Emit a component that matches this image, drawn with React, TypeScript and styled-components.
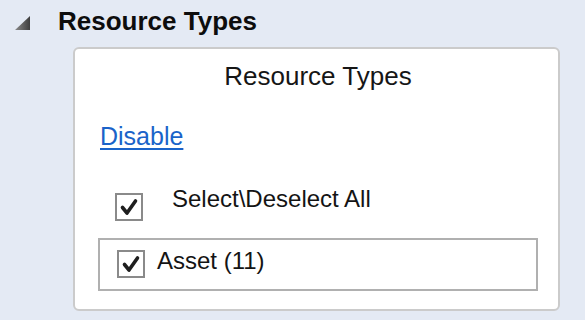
import React from "react";
import styled, { createGlobalStyle } from "styled-components";

const Global = createGlobalStyle`
  html, body {
    margin: 0;
    padding: 0;
    background: #e4eaf4;
    font-family: "Liberation Sans", Arial, sans-serif;
    color: #111;
  }
`;

const Page = styled.div`
  width: 585px;
  height: 320px;
  box-sizing: border-box;
  padding-top: 6px;
  background: #e4eaf4;
  overflow: hidden;
`;

const ExpanderHeader = styled.div`
  display: flex;
  align-items: center;
  height: 30px;
  padding-left: 15px;
  gap: 28px;
`;

const Glyph = styled.svg`
  width: 15px;
  height: 14px;
  flex: none;
  margin-top: 3px;
`;

const HeaderTitle = styled.span`
  font-size: 26px;
  line-height: 30px;
  font-weight: bold;
  color: #0d0d0d;
`;

const Card = styled.div`
  margin: 11px 0 0 73px;
  width: 487px;
  box-sizing: border-box;
  border: 2px solid #cbcbcb;
  border-radius: 6px;
  background: #fff;
  padding: 12px 20px 18px 0;
  display: flex;
  flex-direction: column;
`;

const CardTitle = styled.div`
  font-size: 26px;
  line-height: 30px;
  text-align: center;
  padding-left: 23px;
  color: #161616;
`;

const LinkText = styled.a`
  align-self: flex-start;
  margin: 30px 0 0 25px;
  font-size: 25px;
  line-height: 30px;
  color: #1a63c9;
  text-decoration: underline;
  text-underline-offset: 3px;
  cursor: pointer;
`;

const CheckRow = styled.label<{ $indent: number; $gap: number; $boxTop: number; $textTop: number }>`
  display: flex;
  align-items: flex-start;
  padding-left: ${(p) => p.$indent}px;
  gap: ${(p) => p.$gap}px;

  & > svg {
    margin-top: ${(p) => p.$boxTop}px;
  }
  & > span {
    margin-top: ${(p) => p.$textTop}px;
  }
`;

const SelectAllRow = styled(CheckRow)`
  margin-top: 33px;
`;

const CheckText = styled.span`
  font-size: 24px;
  line-height: 30px;
  color: #141414;
`;

const ListBox = styled.div`
  margin: 17px 0 0 23px;
  height: 53px;
  box-sizing: border-box;
  border: 2px solid #b0b0b0;
  background: #fff;
`;

const BoxSvg = styled.svg`
  width: 28px;
  height: 28px;
  flex: none;
`;

function CheckBox() {
  return (
    <BoxSvg viewBox="0 0 28 28">
      <rect x="1" y="1" width="26" height="26" fill="#fff" stroke="#8a8a8a" strokeWidth="2" />
      <path
        d="M7.5 14.5 L12 20 L20.5 8"
        fill="none"
        stroke="#1e1e1e"
        strokeWidth="3.6"
        strokeLinecap="round"
        strokeLinejoin="round"
      />
    </BoxSvg>
  );
}

export default function App() {
  return (
    <>
      <Global />
      <Page>
        <ExpanderHeader>
          <Glyph viewBox="0 0 15 14">
            <defs>
              <linearGradient id="gl" x1="0" y1="0" x2="1" y2="0">
                <stop offset="0" stopColor="#8a8a8a" />
                <stop offset="1" stopColor="#3e3e3e" />
              </linearGradient>
            </defs>
            <polygon points="15,0 15,14 0,14" fill="url(#gl)" />
          </Glyph>
          <HeaderTitle>Resource Types</HeaderTitle>
        </ExpanderHeader>
        <Card>
          <CardTitle>Resource Types</CardTitle>
          <LinkText>Disable</LinkText>
          <SelectAllRow $indent={40} $gap={29} $boxTop={9} $textTop={0}>
            <CheckBox />
            <CheckText>Select\Deselect All</CheckText>
          </SelectAllRow>
          <ListBox>
            <CheckRow $indent={17} $gap={12} $boxTop={10} $textTop={6}>
              <CheckBox />
              <CheckText>Asset (11)</CheckText>
            </CheckRow>
          </ListBox>
        </Card>
      </Page>
    </>
  );
}
